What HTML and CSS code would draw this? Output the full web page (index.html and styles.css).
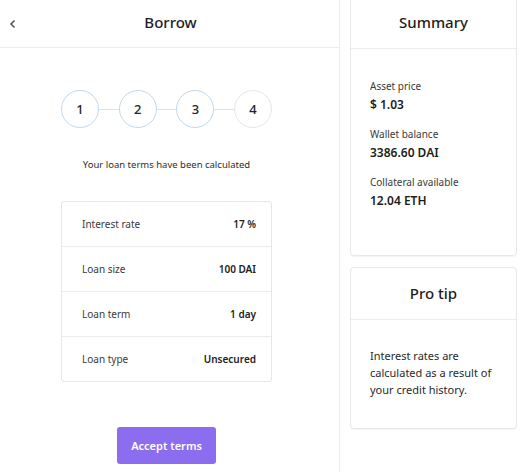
FILE: index.html
```html
<!DOCTYPE html>
<html>
<head>
<meta charset="utf-8">
<link rel="stylesheet" href="styles.css">
</head>
<body>
<div class="page">
  <main class="main">
    <header class="main-head">
      <span class="back"><svg width="8" height="10" viewBox="0 0 8 10"><path d="M5.5 1.5 L2 5 L5.5 8.5" fill="none" stroke="#555" stroke-width="1.6"/></svg></span>
      <h1 class="title">Borrow</h1>
    </header>
    <div class="content">
      <div class="steps">
        <div class="step done">1</div>
        <div class="link"></div>
        <div class="step done">2</div>
        <div class="link"></div>
        <div class="step done">3</div>
        <div class="link"></div>
        <div class="step">4</div>
      </div>
      <p class="msg">Your loan terms have been calculated</p>
      <div class="terms">
        <div class="row"><span class="lbl">Interest rate</span><span class="val">17 %</span></div>
        <div class="row"><span class="lbl">Loan size</span><span class="val">100 DAI</span></div>
        <div class="row"><span class="lbl">Loan term</span><span class="val">1 day</span></div>
        <div class="row"><span class="lbl">Loan type</span><span class="val">Unsecured</span></div>
      </div>
      <button class="accept">Accept terms</button>
    </div>
  </main>
  <aside class="side">
    <section class="card">
      <h2 class="card-head">Summary</h2>
      <div class="card-body summary">
        <div class="item"><div class="ilbl">Asset price</div><div class="ival">$ 1.03</div></div>
        <div class="item"><div class="ilbl">Wallet balance</div><div class="ival">3386.60 DAI</div></div>
        <div class="item"><div class="ilbl">Collateral available</div><div class="ival">12.04 ETH</div></div>
      </div>
    </section>
    <section class="card">
      <h2 class="card-head">Pro tip</h2>
      <div class="card-body tip">Interest rates are calculated as a result of your credit history.</div>
    </section>
  </aside>
</div>
</body>
</html>
```
FILE: styles.css
```css
* { box-sizing: border-box; }
html, body { margin: 0; padding: 0; background: #fff; }
body { font-family: "Noto Sans", "Liberation Sans", sans-serif; color: #222; }
.page { display: flex; width: 520px; height: 472px; overflow: hidden; }
.main { width: 340px; border-right: 1px solid #ececec; height: 472px; }
.main-head { position: relative; height: 48px; border-bottom: 1px solid #ececec; display: flex; align-items: center; justify-content: center; padding-bottom: 3px; }
.back { position: absolute; left: 9px; top: 12px; }
.title { margin: 0; font-size: 15px; font-weight: 500; color: #1d1d1d; padding-left: 2px; }
.content { width: 211px; margin-left: 61px; display: flex; flex-direction: column; align-items: center; }
.steps { margin-top: 42px; display: flex; align-items: center; width: 100%; }
.step { width: 38px; height: 38px; border-radius: 50%; border: 1.5px solid #e6e6e6; display: flex; align-items: center; justify-content: center; font-size: 13px; font-weight: 500; color: #222; flex: none; }
.step.done { border-color: #bfd8ee; }
.link { flex: 1; height: 1px; background: #d8e3ec; }
.msg { margin: 30px 0 0; font-size: 9.5px; line-height: 14px; color: #2e2e2e; }
.terms { margin-top: 29px; width: 100%; border: 1px solid #e6e6e6; border-radius: 3px; }
.row { height: 45px; display: flex; align-items: center; justify-content: space-between; padding: 0 15px 0 20px; border-top: 1px solid #ececec; font-size: 10px; }
.row:first-child { border-top: none; height: 44px; }
.lbl { color: #3a3a3a; }
.val { font-weight: 600; color: #222; }
.accept { margin-top: 45px; width: 99px; height: 37px; border: none; border-radius: 3px; background: #8c6cef; color: #fff; font-family: inherit; font-size: 11px; font-weight: 600; }
.side { width: 167px; margin-left: 10px; margin-top: -4px; display: flex; flex-direction: column; gap: 11px; }
.card { border: 1px solid #e8e8e8; border-radius: 4px; box-shadow: 0 1px 1px rgba(0,0,0,0.04); }
.card-head { margin: 0; height: 52px; border-bottom: 1px solid #ececec; display: flex; align-items: center; justify-content: center; font-size: 15px; font-weight: 500; color: #1d1d1d; padding-bottom: 2px; }
.card-body { padding: 0 19px; }
.summary { padding-top: 30px; padding-bottom: 44px; }
.item + .item { margin-top: 12px; }
.ilbl { font-size: 10px; line-height: 14px; color: #3a3a3a; }
.ival { margin-top: 2px; font-size: 12px; line-height: 20px; font-weight: 600; color: #1d1d1d; }
.tip { padding-top: 27px; padding-bottom: 30px; font-size: 11px; line-height: 17px; color: #2a2a2a; }
```
